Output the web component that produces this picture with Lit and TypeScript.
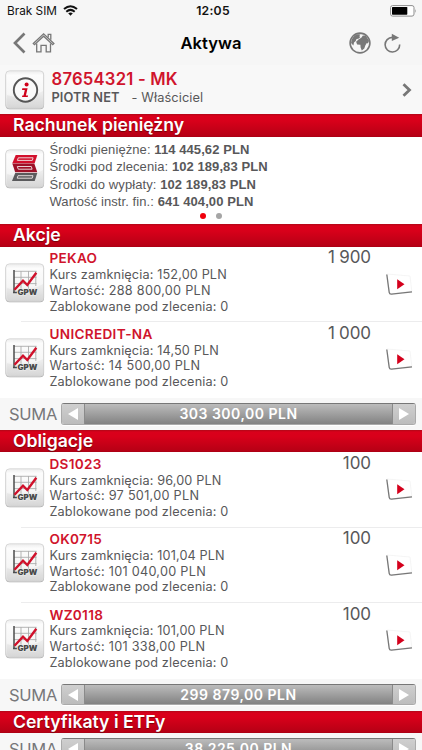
import { LitElement, html, svg, css } from "lit";
import { customElement, property } from "lit/decorators.js";

interface Holding {
  name: string;
  price: string;
  value: string;
  qty: string;
}

const stocks: Holding[] = [
  { name: "PEKAO", price: "152,00", value: "288 800,00", qty: "1 900" },
  { name: "UNICREDIT-NA", price: "14,50", value: "14 500,00", qty: "1 000" },
];

const bonds: Holding[] = [
  { name: "DS1023", price: "96,00", value: "97 501,00", qty: "100" },
  { name: "OK0715", price: "101,04", value: "101 040,00", qty: "100" },
  { name: "WZ0118", price: "101,00", value: "101 338,00", qty: "100" },
];

const cash: [string, string][] = [
  ["Środki pieniężne", "114 445,62"],
  ["Środki pod zlecenia", "102 189,83"],
  ["Środki do wypłaty", "102 189,83"],
  ["Wartość instr. fin.", "641 404,00"],
];

const glyphs = {
  info: svg`
    <circle cx="20.5" cy="20" r="11.7" fill="#fafafa" stroke="#555" stroke-width="1.9"/>
    <circle cx="21.6" cy="14.6" r="2" fill="#d0021b"/>
    <path d="M17.3 18.3h5.3l-1.7 7.2h2.2l-.4 1.6h-5.7l.3-1.5h1.2l1.3-5.7h-2.8z" fill="#d0021b"/>`,
  cash: svg`
    <path d="M10.700 6H32.300l-2.600 8.200H7.300z" fill="#d2102c"/>
    <path d="M7.300 14.600h22l3 8.600H10.200z" fill="#9d1027"/>
    <path d="M10.200 23.900h22.100L29.700 32H7z" fill="#5a5a5c"/>
    <path d="M13.300 8.800h14.800l-.8 2.600H12.400zM12.300 17.500h14l.8 2.700H13.300zM13 26.700h15l-.8 2.500H12.200z" fill="none" stroke="#f1e6e7" stroke-width=".9"/>`,
  gpw: svg`
    <path d="M9 8.300h22.500M9 14.300h22.500M9 20.600h22.500M16 8v19M23.500 8v19M30.800 8v15" stroke="#adadad" stroke-width=".9" fill="none"/>
    <path d="M9 7v22.600M8 29.600h4" stroke="#4c4c4c" stroke-width="1.5" fill="none"/>
    <path d="M9.500 26.800 18 17.700l4.300 4.300 9-12.200" stroke="#d0112b" stroke-width="2.4" fill="none"/>
    <text x="12.400" y="32.300" class="gpw" textLength="20" lengthAdjust="spacingAndGlyphs">GPW</text>`,
};

@customElement("tile-icon")
class TileIcon extends LitElement {
  @property() kind: keyof typeof glyphs = "gpw";
  static styles = css`
    :host {
      display: block;
      width: 40px;
      height: 40px;
      flex: none;
    }
    svg {
      display: block;
    }
    .gpw {
      font: 900 7.6px Inter, sans-serif;
      fill: #4a4a4a;
      stroke: #eee;
      stroke-width: 1.2px;
      paint-order: stroke;
    }
  `;
  render() {
    return html`<svg width="40" height="40" viewBox="0 0 40 40">
      <defs>
        <linearGradient id="face" x1="0" y1="0" x2="0" y2="1">
          <stop offset="0" stop-color="#ececec" />
          <stop offset=".12" stop-color="#fcfcfc" />
          <stop offset=".6" stop-color="#f6f6f6" />
          <stop offset="1" stop-color="#dedede" />
        </linearGradient>
      </defs>
      <rect x=".6" y="1.600" width="38.400" height="37.600" rx="4" fill="#a9a9a9" />
      <rect x=".7" y=".8" width="38" height="37.600" rx="4" fill="url(#face)" stroke="#cfcfcf" stroke-width=".7" />
      <path d="M2 25Q20 31 38 21V34q0 4-4 4H6q-4 0-4-4z" fill="#000" opacity=".04" />
      ${glyphs[this.kind]}
    </svg>`;
  }
}

@customElement("section-title")
class SectionTitle extends LitElement {
  static styles = css`
    :host {
      display: block;
      box-sizing: border-box;
      height: 22.6px;
      padding-left: 13px;
      background: linear-gradient(#b00818 0, #da001b 2px, #d8001a 30%, #b70015 94%, #a80014 100%);
      color: #fff;
      font: 600 17.6px/22.6px Inter, sans-serif;
      letter-spacing: 0;
      text-shadow: 0 1px 1px rgba(70, 0, 0, 0.6);
      white-space: nowrap;
    }
  `;
  render() {
    return html`<slot></slot>`;
  }
}

@customElement("holding-row")
class HoldingRow extends LitElement {
  @property({ attribute: false }) item!: Holding;
  static styles = css`
    :host {
      display: flex;
      box-sizing: border-box;
      height: 75.4px;
      padding-left: 5px;
      background: #fff;
      color: #58585a;
    }
    :host(.divided) {
      background: linear-gradient(#ececed, #ececed) 21px 100% / 401px 1px no-repeat #fff;
    }
    tile-icon {
      margin-top: 15.600px;
    }
    .text {
      flex: 1;
      margin-left: 4.5px;
      padding-top: 4.5px;
      font: 400 12.7px/15.7px Inter, sans-serif;
      letter-spacing: 0.13px;
      white-space: nowrap;
    }
    .name {
      color: #d0142c;
      font-weight: 600;
      font-size: 13.6px;
      letter-spacing: 0.3px;
    }
    .worth {
      letter-spacing: 0.27px;
    }
    .qty {
      padding-top: 0.5px;
      font: 400 17px/20px Inter, sans-serif;
      word-spacing: -0.5px;
      letter-spacing: -0.05px;
    }
    .go {
      margin: 26px 8px 0 14px;
      flex: none;
    }
  `;
  render() {
    const h = this.item;
    return html`
      <tile-icon></tile-icon>
      <div class="text">
        <div class="name">${h.name}</div>
        <div>Kurs zamknięcia: ${h.price} PLN</div>
        <div class="worth">Wartość: ${h.value} PLN</div>
        <div>Zablokowane pod zlecenia: 0</div>
      </div>
      <div class="qty">${h.qty}</div>
      <svg class="go" width="29" height="26" viewBox="0 0 29 26">
        <path d="M2 1 25 3q1 9 1.800 15L7 21q-2 0-2.500-2z" fill="#fff" stroke="#f0f0f0" stroke-width=".7" />
        <path d="M1.800 1.500 4.200 19.300q.3 2 2.300 1.800L27 18.800" fill="none" stroke="#777" stroke-width="1.300" />
        <path d="M12.200 6.300v10l7.300-5z" fill="#d4001c" />
      </svg>
    `;
  }
}

@customElement("sum-row")
class SumRow extends LitElement {
  @property() total = "";
  static styles = css`
    :host {
      display: flex;
      align-items: center;
      box-sizing: border-box;
      height: 32px;
      padding: 0 6px 0 9px;
      background: #f7f7f7;
    }
    .label {
      width: 52px;
      color: #77777a;
      font: 400 16.5px/20px Inter, sans-serif;
      letter-spacing: -0.25px;
    }
    .bar {
      display: flex;
      flex: 1;
      box-sizing: border-box;
      height: 21.5px;
      border: 1px solid #aaa;
      border-top-color: #777;
      border-radius: 3px;
      overflow: hidden;
      box-shadow: 0 1px #fff;
    }
    .end {
      display: flex;
      align-items: center;
      justify-content: center;
      width: 22px;
      background: linear-gradient(#cfcfcf, #bcbcbc);
    }
    .value {
      flex: 1;
      border: solid #8a8a8a;
      border-width: 0 1px;
      background: linear-gradient(#bcbcbc, #828282);
      color: #fff;
      font: 600 14px/20px Inter, sans-serif;
      letter-spacing: 0.5px;
      text-align: center;
    }
  `;
  render() {
    return html`
      <span class="label">SUMA</span>
      <div class="bar">
        <div class="end"><svg width="10" height="12"><path d="M10 0v12L0 6z" fill="#fff" /></svg></div>
        <div class="value">${this.total} PLN</div>
        <div class="end"><svg width="10" height="12"><path d="M0 0v12l10-6z" fill="#fff" /></svg></div>
      </div>
    `;
  }
}

@customElement("app-root")
class AppRoot extends LitElement {
  static styles = css`
    :host {
      display: block;
      height: 750px;
      overflow: hidden;
      background: #fff;
      font-family: Inter, sans-serif;
      color: #58585a;
    }
    .status {
      display: grid;
      grid-template-columns: 1fr auto 1fr;
      align-items: center;
      box-sizing: border-box;
      height: 22px;
      padding: 0 5px 1px 7px;
      background: #f6f6f6;
      color: #111;
      font-size: 11.8px;
    }
    .carrier {
      display: flex;
      align-items: center;
      gap: 6px;
    }
    .clock {
      font-weight: 600;
      font-size: 12.2px;
      letter-spacing: 0.25px;
      padding-left: 2px;
    }
    .battery {
      justify-self: end;
    }
    .nav {
      display: grid;
      grid-template-columns: 1fr auto 1fr;
      align-items: center;
      box-sizing: border-box;
      height: 43px;
      padding: 0 21px 1px 13px;
      background: #f6f6f6;
    }
    .side {
      display: flex;
      align-items: center;
    }
    .left {
      gap: 6px;
    }
    .right {
      justify-content: flex-end;
      gap: 12px;
    }
    h1 {
      margin: 0;
      padding-left: 8px;
      color: #000;
      font-weight: 600;
      font-size: 16.6px;
    }
    .account {
      display: flex;
      align-items: center;
      height: 49.4px;
      padding: 0 10px 0 5px;
      background: #f8f8f8;
    }
    .owner {
      flex: 1;
      margin: -3px 0 0 6.5px;
      white-space: nowrap;
    }
    .number {
      color: #d0142c;
      font-weight: 600;
      font-size: 16.7px;
      line-height: 20px;
      letter-spacing: 0.2px;
    }
    .person {
      display: flex;
      gap: 12px;
      font-size: 12.8px;
      line-height: 18px;
      letter-spacing: 0.1px;
    }
    .person b {
      font-weight: 600;
    }
    .cash {
      display: flex;
      box-sizing: border-box;
      height: 72px;
      padding: 5px 0 0 5px;
    }
    .cash tile-icon {
      margin-top: 7.4px;
    }
    .lines {
      margin: -1px 0 0 4.5px;
      font: 13px/17.4px "Liberation Sans", sans-serif;
      letter-spacing: 0.08px;
      white-space: nowrap;
    }
    .dots {
      display: flex;
      justify-content: center;
      gap: 10px;
      box-sizing: border-box;
      height: 15.4px;
      padding-top: 4px;
    }
    .dot {
      width: 6px;
      height: 6px;
      border-radius: 50%;
      background: #a5a5a5;
    }
    .dot.on {
      background: #f0000c;
    }
  `;
  private holdings(items: Holding[]) {
    return items.map(
      (h, i) => html`<holding-row class=${i < items.length - 1 ? "divided" : ""} .item=${h}></holding-row>`
    );
  }
  render() {
    return html`
      <div class="status">
        <div class="carrier">
          <span>Brak SIM</span>
          <svg width="15" height="11" viewBox="0 0 15 11" fill="none" stroke="#111" stroke-width="2">
            <path d="M1 4q6.500-5.600 13 0M3.300 6.700q4.200-3.600 8.400 0" />
            <path d="M5.200 8.300q2.300-1.600 4.600 0L7.500 10.800z" fill="#111" stroke="none" />
          </svg>
        </div>
        <div class="clock">12:05</div>
        <svg class="battery" width="27" height="12" viewBox="0 0 27 12">
          <rect x=".6" y=".6" width="23.400" height="10.500" rx="2" fill="#fff" stroke="#8d8d8d" />
          <rect x="2" y="2" width="15.300" height="7.700" rx=".6" fill="#000" />
          <path d="M25.200 4q1.600 2 0 4z" fill="#999" />
        </svg>
      </div>
      <div class="nav">
        <div class="side left">
          <svg width="13" height="22" viewBox="0 0 13 22"><path d="M11.500 1.500 2 11l9.500 9.500" fill="none" stroke="#777" stroke-width="2.700" /></svg>
          <svg width="24" height="22" viewBox="0 0 24 22" fill="none" stroke="#777" stroke-width="1.300">
            <path d="M1.300 11.500 11.600 1.800l10.300 9.700-1.200 1.200-9.100-8.500-9.100 8.500z" />
            <path d="M4.700 11.500v8.300H9v-6.500h5.200v6.500h4.300v-8.300" />
            <path d="M16.200 5.500V2.300h2.600v5.500" />
          </svg>
        </div>
        <h1>Aktywa</h1>
        <div class="side right">
          <svg width="22" height="22" viewBox="0 0 22 22">
            <circle cx="11" cy="11" r="9.900" fill="#f6f6f6" stroke="#777" stroke-width="1.600" />
            <path d="M3 7Q5 3 9 2.200l2.500.4-1.300 1.600 1.200.8-2 1.800-1.900.1-.8 2.200L5 10.500l-.6 3L2 11z" fill="#777" />
            <path d="m9.800 7.300 2.500-1.500 1.600-2.300 3.100.3 3 5-1 2.600-1.200-.5-1.500 2.500-1 3-2.500 2.200-1.200-3.100-.2-2.700-3.300-.4-1-2.600z" fill="#777" />
          </svg>
          <svg width="18" height="20" viewBox="0 0 18 20">
            <path d="M13 4.400H9.300a7.300 7.300 0 1 0 7.400 7.100" fill="none" stroke="#777" stroke-width="1.600" />
            <path d="M8.800.8v7.100l7.400-3.200z" fill="#777" />
          </svg>
        </div>
      </div>
      <div class="account">
        <tile-icon kind="info"></tile-icon>
        <div class="owner">
          <div class="number">87654321 - MK</div>
          <div class="person"><b>PIOTR NET</b><span>- Właściciel</span></div>
        </div>
        <svg width="10" height="14" viewBox="0 0 10 14"><path d="m1.500 1.200 6 5.800-6 5.800" fill="none" stroke="#777" stroke-width="2.800" /></svg>
      </div>
      <section-title>Rachunek pieniężny</section-title>
      <div class="cash">
        <tile-icon kind="cash"></tile-icon>
        <div class="lines">
          ${cash.map(([label, amount]) => html`<div>${label}: <b>${amount} PLN</b></div>`)}
        </div>
      </div>
      <div class="dots"><i class="dot on"></i><i class="dot"></i></div>
      <section-title>Akcje</section-title>
      ${this.holdings(stocks)}
      <sum-row total="303 300,00"></sum-row>
      <section-title>Obligacje</section-title>
      ${this.holdings(bonds)}
      <sum-row total="299 879,00"></sum-row>
      <section-title>Certyfikaty i ETFy</section-title>
      <sum-row total="38 225,00"></sum-row>
    `;
  }
}
